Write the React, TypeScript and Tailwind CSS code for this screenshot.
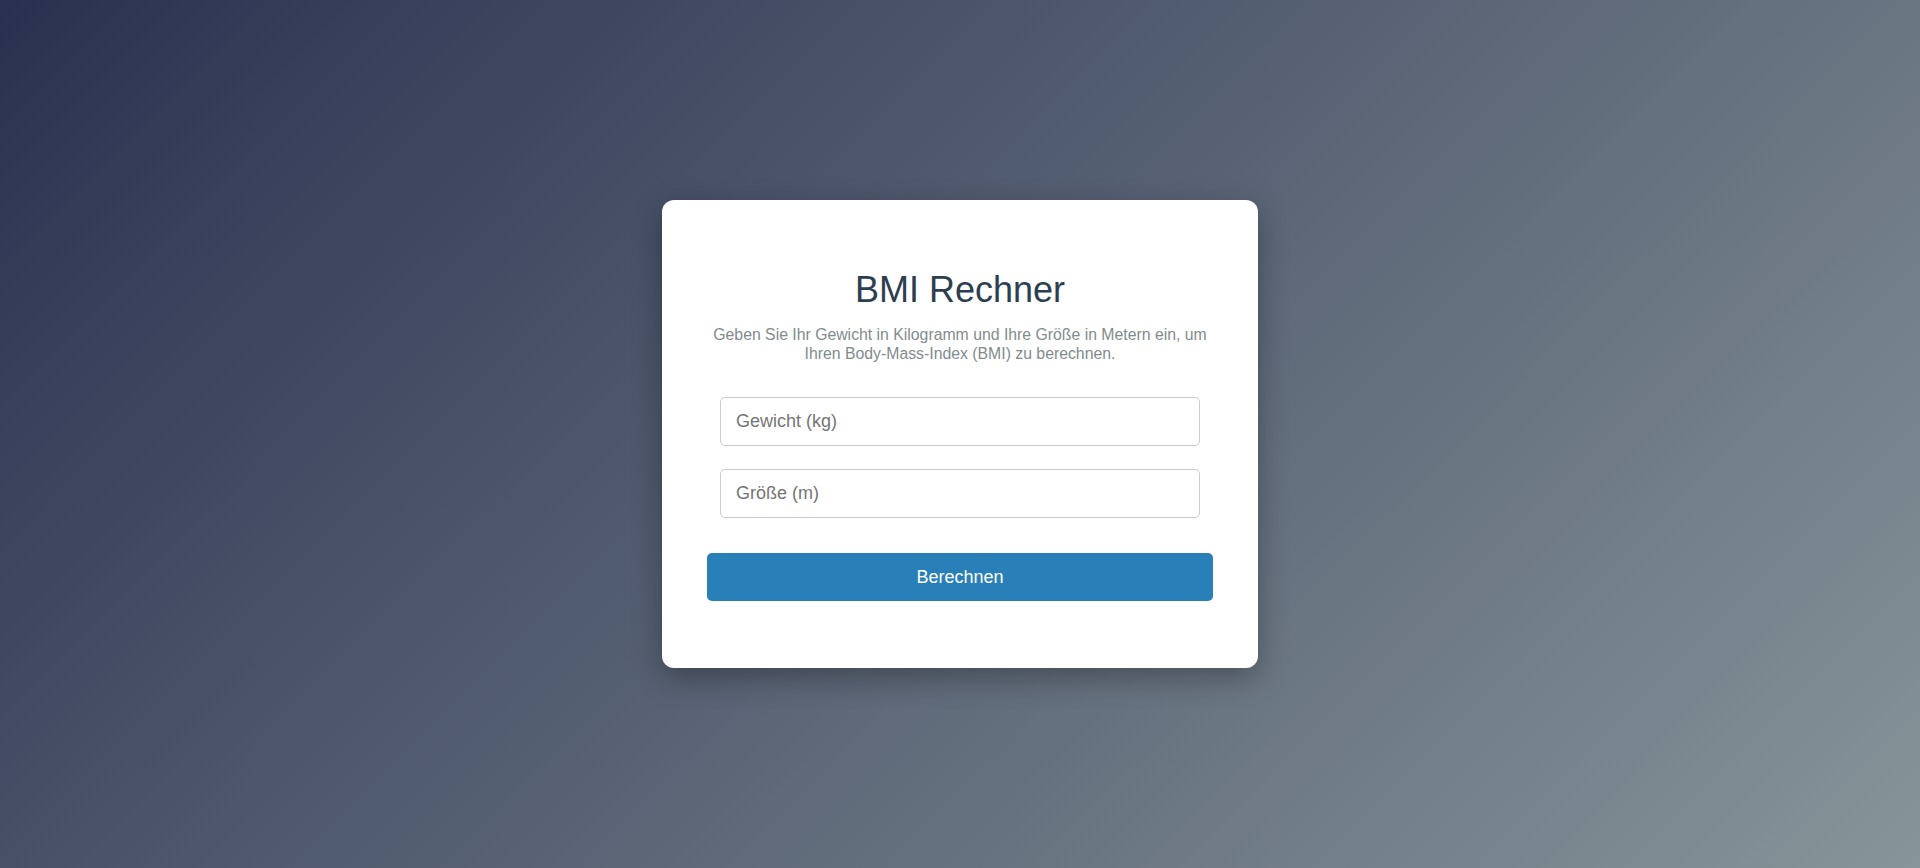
export default function App() {
    return (
        <div className="flex min-h-screen w-full items-center justify-center bg-[linear-gradient(135deg,#2a3150_0%,#879499_100%)] font-['Liberation_Sans',Arial,sans-serif]">
            {/* ── Card ── */}
            <div className="w-[596px] rounded-xl bg-white px-[45px] pt-[45px] pb-[67px] text-center shadow-[0_10px_30px_rgba(0,0,0,0.3)]">
                <h1 className="mt-[24px] text-[36px] leading-[41px] font-normal text-[#2c3e50]">BMI Rechner</h1>
                <p className="mt-[16px] text-[15.8px] leading-[18.5px] text-[#7f8c8d]">
                    Geben Sie Ihr Gewicht in Kilogramm und Ihre Größe in Metern ein, um Ihren Body-Mass-Index (BMI) zu berechnen.
                </p>

                {/* ── Inputs ── */}
                <div className="mt-[34px] flex flex-col items-center gap-[23px]">
                    <input
                        type="number"
                        placeholder="Gewicht (kg)"
                        className="h-[49px] w-[480px] rounded-[5px] border border-[#cccccc] bg-white px-[15px] text-[18px] text-[#333] placeholder:text-[#757575] focus:outline-none"
                    />
                    <input
                        type="number"
                        placeholder="Größe (m)"
                        className="h-[49px] w-[480px] rounded-[5px] border border-[#cccccc] bg-white px-[15px] text-[18px] text-[#333] placeholder:text-[#757575] focus:outline-none"
                    />
                </div>

                <button className="mt-[35px] h-[48px] w-full rounded-[5px] bg-[#2980b9] text-[18px] text-white transition hover:bg-[#2471a3]">
                    Berechnen
                </button>
            </div>
        </div>
    );
}
